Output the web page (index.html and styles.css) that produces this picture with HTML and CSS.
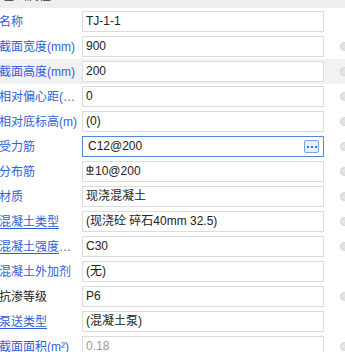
FILE: index.html
```html
<!DOCTYPE html>
<html lang="zh-CN">
<head>
<meta charset="utf-8">
<link rel="stylesheet" href="styles.css">
</head>
<body>
<div class="panel">
  <div class="header"><span class="header-text">基础属性</span></div>
  <div class="rows">
    <div class="row"><div class="label">名称</div><div class="box">TJ-1-1</div><div class="pin-cell"></div></div>
    <div class="row"><div class="label">截面宽度(mm)</div><div class="box">900</div><div class="pin-cell"><span class="pin"></span></div></div>
    <div class="row hover"><div class="label">截面高度(mm)</div><div class="box">200</div><div class="pin-cell"><span class="pin"></span></div></div>
    <div class="row"><div class="label">相对偏心距(mm)</div><div class="box">0</div><div class="pin-cell"><span class="pin"></span></div></div>
    <div class="row"><div class="label">相对底标高(m)</div><div class="box">(0)</div><div class="pin-cell"><span class="pin"></span></div></div>
    <div class="row"><div class="label">受力筋</div><div class="box focus"><span class="val">C12@200</span><span class="more"><i></i><i></i><i></i></span></div><div class="pin-cell"><span class="pin"></span></div></div>
    <div class="row"><div class="label">分布筋</div><div class="box"><svg class="rebar" width="8" height="10" viewBox="0 0 8 10"><path d="M4 0.5V8.5M1.2 2.3H6.8V6H1.2Z M0.3 9.3H7.7" fill="none" stroke="#222" stroke-width="1"/></svg>10@200</div><div class="pin-cell"><span class="pin"></span></div></div>
    <div class="row"><div class="label">材质</div><div class="box">现浇混凝土</div><div class="pin-cell"><span class="pin"></span></div></div>
    <div class="row"><div class="label link">混凝土类型</div><div class="box">(现浇砼 碎石40mm 32.5)</div><div class="pin-cell"><span class="pin"></span></div></div>
    <div class="row"><div class="label link">混凝土强度等级</div><div class="box">C30</div><div class="pin-cell"><span class="pin"></span></div></div>
    <div class="row"><div class="label">混凝土外加剂</div><div class="box">(无)</div><div class="pin-cell"></div></div>
    <div class="row"><div class="label plain">抗渗等级</div><div class="box">P6</div><div class="pin-cell"><span class="pin"></span></div></div>
    <div class="row"><div class="label link">泵送类型</div><div class="box">(混凝土泵)</div><div class="pin-cell"></div></div>
    <div class="row"><div class="label">截面面积(m²)</div><div class="box readonly">0.18</div><div class="pin-cell"><span class="pin"></span></div></div>
  </div>
</div>
</body>
</html>
```
FILE: styles.css
```css
html, body {
  margin: 0;
  padding: 0;
  background: #ffffff;
}
body {
  width: 345px;
  height: 352px;
  overflow: hidden;
  font-family: "Liberation Sans", "Noto Sans CJK SC", sans-serif;
  font-size: 12px;
  color: #222222;
}
.panel {
  width: 345px;
}
.header {
  height: 8px;
  background: #eeeeee;
  overflow: hidden;
}
.header-text {
  display: block;
  margin-top: -11px;
  padding-left: 3px;
  line-height: 14px;
  font-size: 12px;
  color: #333333;
}
.rows {
  padding-top: 1px;
}
.row {
  display: grid;
  grid-template-columns: 82px 242px 21px;
  height: 25px;
  align-items: center;
}
.row.hover {
  background: #f2f2f2;
}
.label {
  margin-left: -1px;
  width: 81px;
  white-space: nowrap;
  overflow: hidden;
  text-overflow: ellipsis;
  color: #2f5fd9;
  line-height: 16px;
}
.label.link {
  text-decoration: underline;
  text-underline-offset: 2px;
}
.label.plain {
  color: #222222;
}
.box {
  box-sizing: border-box;
  height: 21px;
  border: 1px solid #dcdcdc;
  background: #ffffff;
  padding-left: 3px;
  line-height: 19px;
  white-space: nowrap;
  overflow: hidden;
  display: flex;
  align-items: center;
}
.box.focus {
  border-color: #5288dc;
  padding-left: 5px;
  padding-right: 4px;
  justify-content: space-between;
}
.box.readonly {
  color: #9a9a9a;
}
.more {
  box-sizing: border-box;
  width: 15px;
  height: 13px;
  border: 1px solid #7aa3e4;
  border-radius: 2px;
  background: #e7effc;
  display: flex;
  align-items: center;
  justify-content: center;
  gap: 2px;
}
.more i {
  display: block;
  width: 2px;
  height: 2px;
  background: #3f74d2;
}
.rebar {
  display: block;
  margin-right: 1px;
  margin-top: -3px;
}
.pin-cell {
  height: 25px;
  display: flex;
  align-items: center;
}
.pin {
  box-sizing: border-box;
  display: block;
  width: 9px;
  height: 9px;
  margin-left: 16px;
  border-radius: 50%;
  border: 1px solid #cfcfcf;
  background: #e4e4e4;
  flex: none;
}
```
